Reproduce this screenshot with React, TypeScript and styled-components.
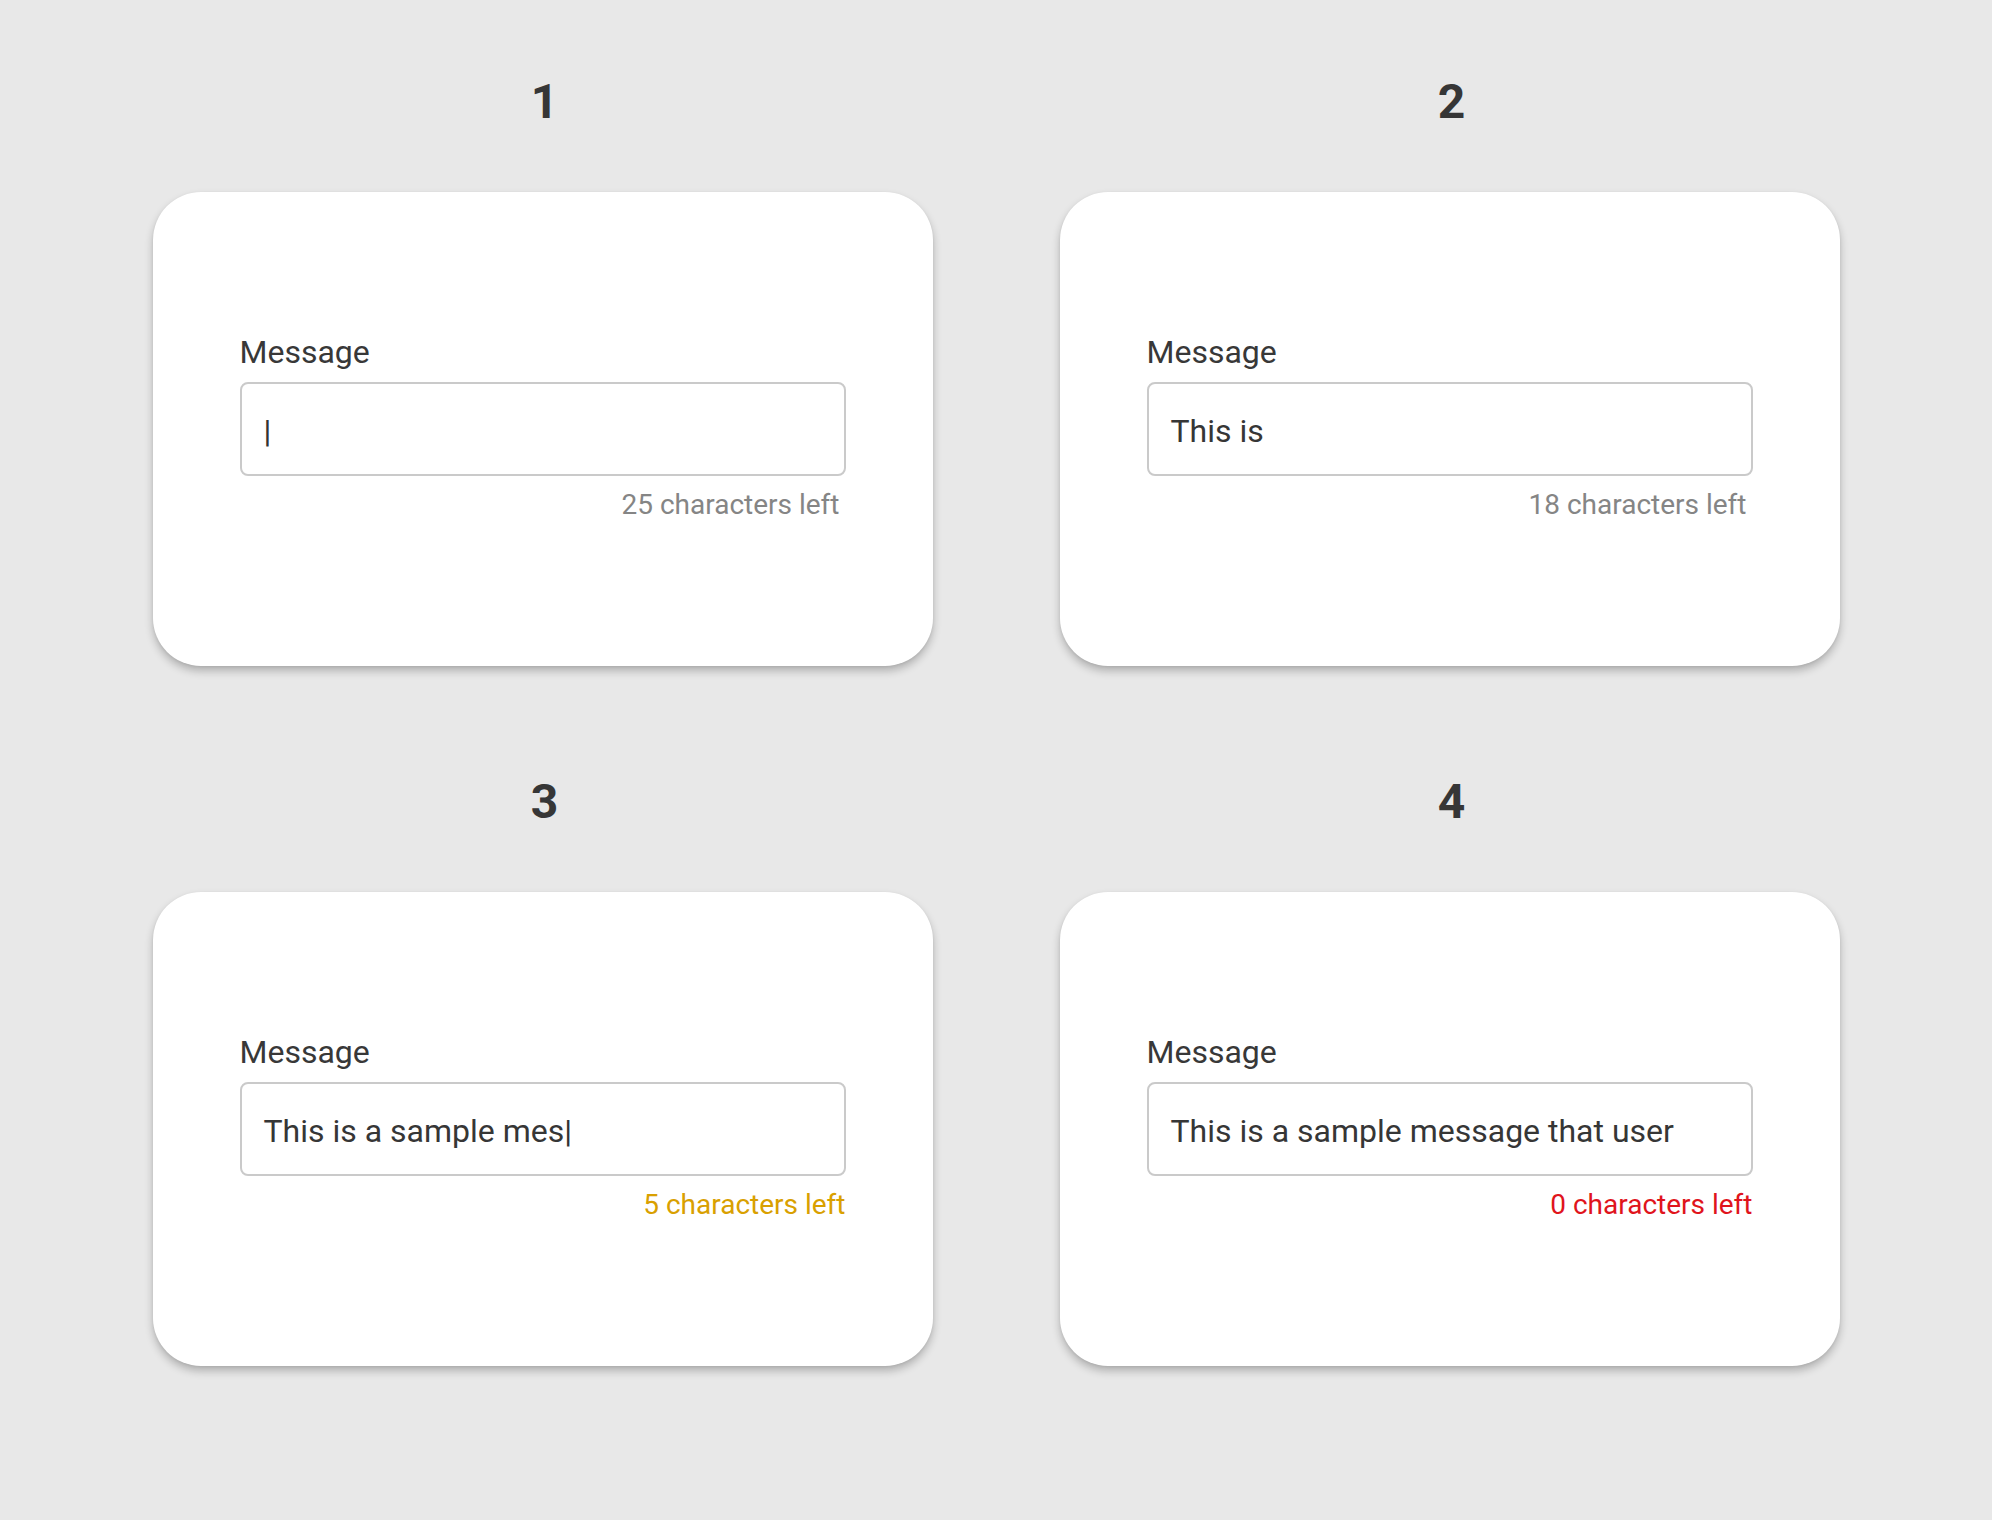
import React from "react";
import styled, { createGlobalStyle } from "styled-components";

const GlobalStyle = createGlobalStyle`
  html, body {
    margin: 0;
    padding: 0;
    background: #e8e8e8;
  }
  body {
    font-family: Roboto, "Noto Sans", "Liberation Sans", sans-serif;
    color: #333333;
  }
`;

const Page = styled.div`
  width: 1992px;
  min-height: 1520px;
  box-sizing: border-box;
  padding-top: 74px;
  display: grid;
  grid-template-columns: repeat(2, 780px);
  column-gap: 127px;
  row-gap: 108px;
  justify-content: center;
  align-content: start;
`;

const Section = styled.section`
  display: flex;
  flex-direction: column;
  align-items: center;
  gap: 62px;
`;

const Title = styled.h2`
  margin: 0;
  padding-left: 4px;
  font-size: 48px;
  line-height: 56px;
  font-weight: 700;
  color: #363636;
`;

const Card = styled.div`
  width: 780px;
  height: 474px;
  box-sizing: border-box;
  padding: 142px 87px 0;
  background: #ffffff;
  border-radius: 48px;
  box-shadow: 0 5px 9px rgba(0, 0, 0, 0.24), 0 1px 3px rgba(0, 0, 0, 0.06);
  display: flex;
  flex-direction: column;
`;

const Label = styled.div`
  font-size: 32px;
  line-height: 36px;
  color: #383838;
  margin-bottom: 12px;
`;

const Field = styled.div`
  height: 94px;
  box-sizing: border-box;
  border: 2px solid #cacaca;
  border-radius: 8px;
  padding: 4px 22px 0;
  display: flex;
  align-items: center;
  font-size: 32px;
  line-height: 38px;
  color: #363636;
  white-space: nowrap;
  overflow: hidden;
`;

const Caret = styled.span`
  color: #333333;
`;

type Tone = "muted" | "warn" | "error";

const toneColor: Record<Tone, string> = {
  muted: "#858585",
  warn: "#d9a000",
  error: "#e0141c",
};

const Counter = styled.div<{ $tone: Tone }>`
  margin-top: 12px;
  text-align: right;
  font-size: 28px;
  line-height: 33px;
  color: ${(p) => toneColor[p.$tone]};
  padding-right: ${(p) => (p.$tone === "muted" ? "6px" : "0")};
`;

type Item = {
  id: number;
  text: string;
  caret: boolean;
  left: number;
  tone: Tone;
};

const items: Item[] = [
  { id: 1, text: "", caret: true, left: 25, tone: "muted" },
  { id: 2, text: "This is", caret: false, left: 18, tone: "muted" },
  { id: 3, text: "This is a sample mes", caret: true, left: 5, tone: "warn" },
  { id: 4, text: "This is a sample message that user", caret: false, left: 0, tone: "error" },
];

export default function App() {
  return (
    <>
      <GlobalStyle />
      <Page>
        {items.map((it) => (
          <Section key={it.id}>
            <Title>{it.id}</Title>
            <Card>
              <Label>Message</Label>
              <Field>
                {it.text}
                {it.caret && <Caret>|</Caret>}
              </Field>
              <Counter $tone={it.tone}>{it.left} characters left</Counter>
            </Card>
          </Section>
        ))}
      </Page>
    </>
  );
}
